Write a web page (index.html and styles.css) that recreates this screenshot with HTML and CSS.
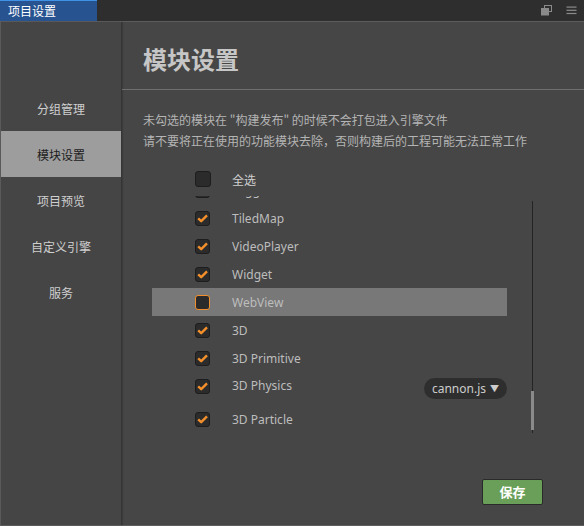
FILE: index.html
```html
<!DOCTYPE html>
<html lang="zh">
<head>
<meta charset="utf-8">
<title>项目设置</title>
<link rel="stylesheet" href="styles.css">
</head>
<body>
<div class="window">
  <div class="titlebar">
    <div class="tab">项目设置</div>
    <div class="title-icons">
      <svg class="ico" width="12" height="11" viewBox="0 0 12 11">
        <rect x="3.5" y="0.5" width="7" height="6" fill="none" stroke="#8a8a8a" stroke-width="1"/>
        <rect x="0.5" y="3.5" width="7" height="6.5" fill="#8a8a8a" stroke="#8a8a8a" stroke-width="1"/>
      </svg>
      <svg class="ico" width="11" height="9" viewBox="0 0 11 9">
        <rect x="0.5" y="0.5" width="10" height="1.2" fill="#8a8a8a"/>
        <rect x="0.5" y="3.7" width="10" height="1.2" fill="#8a8a8a"/>
        <rect x="0.5" y="6.9" width="10" height="1.2" fill="#8a8a8a"/>
      </svg>
    </div>
  </div>
  <div class="body">
    <nav class="sidebar">
      <div class="nav-item">分组管理</div>
      <div class="nav-item active">模块设置</div>
      <div class="nav-item">项目预览</div>
      <div class="nav-item">自定义引擎</div>
      <div class="nav-item">服务</div>
    </nav>
    <main class="main">
      <div class="heading">模块设置</div>
      <div class="desc">
        <div>未勾选的模块在 "构建发布" 的时候不会打包进入引擎文件</div>
        <div>请不要将正在使用的功能模块去除，否则构建后的工程可能无法正常工作</div>
      </div>
      <div class="row select-all">
        <span class="cb big"></span>
        <span class="label">全选</span>
      </div>
      <div class="scroll">
        <div class="list">
          <div class="row"><span class="cb on"></span><span class="label">Toggle</span></div>
          <div class="row"><span class="cb on"></span><span class="label">TiledMap</span></div>
          <div class="row"><span class="cb on"></span><span class="label">VideoPlayer</span></div>
          <div class="row"><span class="cb on"></span><span class="label">Widget</span></div>
          <div class="row hl"><span class="cb focus"></span><span class="label">WebView</span></div>
          <div class="row"><span class="cb on"></span><span class="label">3D</span></div>
          <div class="row"><span class="cb on"></span><span class="label">3D Primitive</span></div>
          <div class="row physics"><span class="cb on"></span><span class="label">3D Physics</span><span class="dropdown">cannon.js<span class="caret">▼</span></span></div>
          <div class="row"><span class="cb on"></span><span class="label">3D Particle</span></div>
        </div>
        <div class="scrollbar"><div class="thumb"></div></div>
      </div>
      <div class="footer">
        <button class="save">保存</button>
      </div>
    </main>
  </div>
</div>
</body>
</html>
```
FILE: styles.css
```css
* { box-sizing: border-box; }
html, body { margin: 0; padding: 0; }
body {
  width: 584px;
  height: 526px;
  overflow: hidden;
  background: #464646;
  font-family: "Noto Sans", "Noto Sans CJK SC", sans-serif;
  font-size: 12px;
  color: #bdbdbd;
}
.window {
  width: 584px;
  height: 526px;
  display: flex;
  flex-direction: column;
}
.titlebar {
  height: 22px;
  flex: none;
  background: #2e2e2e;
  border-bottom: 1px solid #5c5c5c;
  display: flex;
  align-items: stretch;
}
.tab {
  width: 97px;
  background: #285391;
  border-top: 1px solid #3f92e6;
  color: #ffffff;
  font-family: "Noto Sans CJK SC", sans-serif;
  font-size: 12px;
  line-height: 19px;
  padding-left: 8px;
}
.title-icons {
  margin-left: auto;
  display: flex;
  align-items: center;
  gap: 13px;
  padding-right: 7px;
  padding-bottom: 1px;
}
.ico { display: block; }
.body {
  flex: 1;
  display: flex;
  border-left: 1px solid #5a5a5a;
  border-bottom: 1px solid #5e5e5e;
  min-height: 0;
}
.sidebar {
  width: 121px;
  flex: none;
  background: #454545;
  border-right: 1px solid #363636;
  box-shadow: 1px 0 1px rgba(0,0,0,0.15);
  padding-top: 63px;
}
.nav-item {
  height: 46px;
  display: flex;
  align-items: center;
  justify-content: center;
  font-family: "Noto Sans CJK SC", sans-serif;
  font-size: 12px;
  color: #cfcfcf;
}
.nav-item.active {
  background: #9d9d9d;
  color: #1c1c1c;
}
.main {
  flex: 1;
  display: flex;
  flex-direction: column;
  min-width: 0;
}
.heading {
  height: 68px;
  flex: none;
  border-bottom: 1px solid #6e6e6e;
  padding: 25px 0 0 21px;
  font-family: "Noto Sans CJK SC", sans-serif;
  font-weight: 700;
  font-size: 24px;
  line-height: 24px;
  color: #c6c6c6;
}
.desc {
  margin-top: 19px;
  padding-left: 21px;
  font-family: "Noto Sans CJK SC", sans-serif;
  font-size: 12px;
  line-height: 21px;
  color: #b4b4b4;
}
.row {
  height: 28px;
  display: flex;
  align-items: center;
  padding-left: 43px;
}
.select-all {
  margin-top: 14px;
  margin-left: 30px;
  width: 355px;
}
.label {
  margin-left: 22px;
  color: #bdbdbd;
  white-space: nowrap;
}
.select-all .label {
  margin-left: 21px;
  font-family: "Noto Sans CJK SC", sans-serif;
  color: #d0d0d0;
}
.cb {
  width: 15px;
  height: 15px;
  flex: none;
  background: #2b2b2b;
  border: 1px solid #1d1d1d;
  border-radius: 3px;
}
.cb.big {
  width: 16px;
  height: 16px;
}
.cb.on {
  background: #2b2b2b url("data:image/svg+xml;utf8,<svg xmlns='http://www.w3.org/2000/svg' width='13' height='13' viewBox='0 0 13 13'><path d='M2.2 6.4 L5.2 9.2 L11 3.3' fill='none' stroke='%23f3902c' stroke-width='2.4' stroke-linejoin='round'/></svg>") center / 13px 13px no-repeat;
}
.cb.focus {
  border: 1.5px solid #f28f2c;
}
.scroll {
  margin-top: 3px;
  height: 243px;
  overflow: hidden;
  display: flex;
  align-items: flex-start;
}
.list {
  width: 355px;
  margin-left: 30px;
  margin-top: -20px;
  flex: none;
}
.row.hl {
  background: #787878;
}
.row.physics {
  height: 33px;
  align-items: flex-start;
}
.row.physics .cb { margin-top: 7px; }
.row.physics .label { line-height: 28px; }
.dropdown {
  margin-left: auto;
  margin-top: 6px;
  height: 21px;
  width: 83px;
  border-radius: 11px;
  background: #2e2e2e;
  color: #cccccc;
  font-size: 12px;
  line-height: 21px;
  text-align: center;
  white-space: nowrap;
}
.caret {
  font-size: 9px;
  margin-left: 4px;
  vertical-align: 1px;
}
.scrollbar {
  margin-left: 24px;
  margin-top: 5px;
  width: 3px;
  height: 232px;
  position: relative;
  display: flex;
  flex-direction: column;
  align-items: center;
}
.scrollbar::before {
  content: "";
  width: 1px;
  height: 232px;
  background: #242424;
}
.thumb {
  position: absolute;
  left: 0;
  top: 190px;
  width: 3px;
  height: 39px;
  background: #8a8a8a;
}
.footer {
  margin-top: auto;
  display: flex;
  justify-content: flex-end;
  padding: 0 41px 20px 0;
}
.save {
  width: 61px;
  height: 26px;
  background: #6a9f59;
  border: 1px solid #2a2a2a;
  border-radius: 2px;
  color: #ffffff;
  font-family: "Noto Sans CJK SC", sans-serif;
  font-weight: 700;
  font-size: 13px;
  padding: 0;
  line-height: 24px;
}
```
